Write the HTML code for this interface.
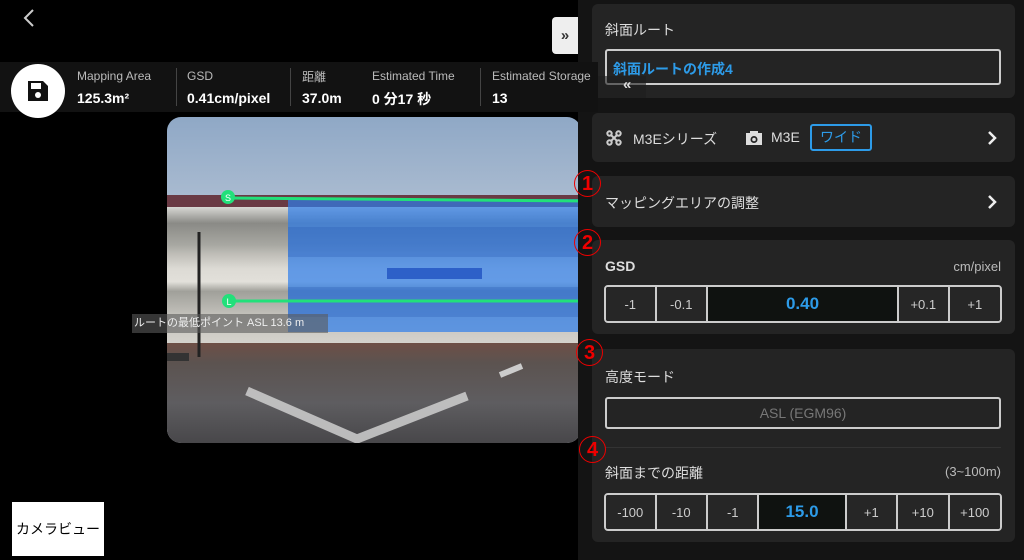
<!DOCTYPE html>
<html><head><meta charset="utf-8"><style>
*{margin:0;padding:0;box-sizing:border-box}
body{width:1024px;height:560px;background:#000;position:relative;overflow:hidden;font-family:"Liberation Sans","Noto Sans CJK JP",sans-serif;color:#ddd}
.abs{position:absolute}
.card{position:absolute;left:592px;width:423px;background:#242424;border-radius:6px}
.lbl{font-size:14px;color:#ddd}
.seg{position:absolute;display:flex;border:2px solid #ccc;border-radius:4px;overflow:hidden;height:38px}
.seg div{border-right:2px solid #ccc;display:flex;align-items:center;justify-content:center;font-size:13px;color:#ccc;background:#262626}
.seg div:last-child{border-right:none}
.seg .v{background:#0f1210;color:#2d9be8;font-size:17px;font-weight:bold}
.red{position:absolute;color:#e00;font-size:20px;font-weight:bold;width:27px;height:27px;border:1.5px solid #e00;border-radius:50%;display:flex;align-items:center;justify-content:center;font-family:"Liberation Sans",sans-serif;line-height:1}
</style></head><body>
<svg class="abs" style="left:22px;top:8px" width="14" height="20"><path d="M11 2 L3 10 L11 18" stroke="#ccc" stroke-width="2" fill="none"/></svg>
<div class="abs" style="left:167px;top:117px;width:414px;height:326px;border-radius:14px;overflow:hidden;background:linear-gradient(#8fa8c6 0%,#b9c6d6 40%,#cdd2d8 100%)">
 <div class="abs" style="left:0;top:78px;width:414px;height:12px;background:#6a3a44"></div>
 <div class="abs" style="left:0;top:90px;width:414px;height:136px;background:linear-gradient(#d8d8d4 0%,#8a8a86 12%,#a8a8a2 28%,#bdbcb6 34%,#dcdad4 45%,#e2e0da 55%,#a0a09a 62%,#c4c2bc 80%,#d4d2cc 100%)"></div>
 <div class="abs" style="left:0;top:226px;width:414px;height:100px;background:linear-gradient(#6e4f46,#5c5350 20%,#5e5d60 60%,#48474a)"></div>
 <div class="abs" style="left:121px;top:82px;width:293px;height:133px;background:rgba(45,125,235,.7)"></div>
 <div class="abs" style="left:121px;top:110px;width:293px;height:30px;background:rgba(30,80,170,.25)"></div>
 <div class="abs" style="left:121px;top:170px;width:293px;height:30px;background:rgba(30,80,170,.25)"></div>
 <div class="abs" style="left:220px;top:151px;width:95px;height:11px;background:#2d60c8"></div>
 <svg class="abs" style="left:0;top:0" width="414" height="326"><path d="M80 274 L190 322 L300 279" stroke="#cfcfcf" stroke-width="9" fill="none" opacity=".85"/><path d="M333 258 L355 249" stroke="#ccc" stroke-width="6"/><line x1="32" y1="115" x2="32" y2="240" stroke="#222" stroke-width="3"/><rect x="0" y="236" width="22" height="8" fill="#333"/></svg>
</div>
<svg class="abs" style="left:0;top:0" width="600" height="340"><path d="M228 198 L590 201" stroke="#22e07a" stroke-width="3"/><path d="M228 301 L590 301" stroke="#22e07a" stroke-width="3"/><circle cx="228" cy="197" r="7" fill="#22e07a"/><circle cx="229" cy="301" r="7" fill="#22e07a"/><text x="228" y="201" font-size="9" fill="#fff" text-anchor="middle" font-family="Liberation Sans">S</text><text x="229" y="305" font-size="9" fill="#fff" text-anchor="middle" font-family="Liberation Sans">L</text></svg>
<div class="abs" style="left:132px;top:314px;width:196px;height:19px;background:rgba(90,90,90,.6);font-size:11px;color:#eee;line-height:19px;padding-left:2px;white-space:nowrap">ルートの最低ポイント ASL 13.6 m</div>
<div class="abs" style="left:12px;top:502px;width:92px;height:54px;background:#fff;color:#000;font-size:14px;display:flex;align-items:center;justify-content:center">カメラビュー</div>
<div class="abs" style="left:578px;top:0;width:446px;height:560px;background:#141414"></div>
<div class="abs" style="left:552px;top:17px;width:26px;height:37px;background:#eee;border-radius:4px 0 0 4px;color:#333;font-size:15px;font-weight:bold;display:flex;align-items:center;justify-content:center">»</div>
<div class="card" style="top:4px;height:94px"></div>
<div class="abs lbl" style="left:605px;top:20px">斜面ルート</div>
<div class="abs" style="left:605px;top:49px;width:396px;height:36px;border:2px solid #ccc;border-radius:3px;color:#2d9be8;font-size:14px;font-weight:bold;padding:8px 0 0 6px">斜面ルートの作成4</div>
<div class="abs" style="left:0;top:62px;width:598px;height:50px;background:#121212"></div>
<div class="abs" style="left:598px;top:76px;width:48px;height:22px;background:rgba(30,30,30,.6)"></div>
<div class="abs" style="left:623px;top:76px;color:#ddd;font-size:15px;font-weight:bold">«</div>
<div class="abs" style="left:11px;top:64px;width:54px;height:54px;border-radius:50%;background:#fff"></div>
<svg class="abs" style="left:26px;top:79px" width="24" height="24"><path d="M2 2h15l5 5v15H2z" fill="#111"/><rect x="5" y="4" width="10" height="6" fill="#fff"/><circle cx="12" cy="16" r="3" fill="#fff"/></svg>
<div class="abs" style="left:77px;top:69px;font-size:12px;color:#bbb">Mapping Area</div>
<div class="abs" style="left:77px;top:90px;font-size:14px;font-weight:bold;color:#fff">125.3m²</div>
<div class="abs" style="left:176px;top:68px;width:1px;height:38px;background:#444"></div>
<div class="abs" style="left:187px;top:69px;font-size:12px;color:#bbb">GSD</div>
<div class="abs" style="left:187px;top:90px;font-size:14px;font-weight:bold;color:#fff">0.41cm/pixel</div>
<div class="abs" style="left:290px;top:68px;width:1px;height:38px;background:#444"></div>
<div class="abs" style="left:302px;top:68px;font-size:12px;color:#bbb">距離</div>
<div class="abs" style="left:302px;top:90px;font-size:14px;font-weight:bold;color:#fff">37.0m</div>
<div class="abs" style="left:372px;top:69px;font-size:12px;color:#bbb">Estimated Time</div>
<div class="abs" style="left:372px;top:89px;font-size:14px;font-weight:bold;color:#fff">0 分17 秒</div>
<div class="abs" style="left:480px;top:68px;width:1px;height:38px;background:#444"></div>
<div class="abs" style="left:492px;top:69px;font-size:12px;color:#bbb;white-space:nowrap">Estimated Storage</div>
<div class="abs" style="left:492px;top:90px;font-size:14px;font-weight:bold;color:#fff">13</div>
<div class="card" style="top:113px;height:49px"></div>
<svg class="abs" style="left:606px;top:130px" width="16" height="16"><g stroke="#ccc" stroke-width="2" fill="none"><circle cx="3.5" cy="3.5" r="2.2"/><circle cx="12.5" cy="3.5" r="2.2"/><circle cx="3.5" cy="12.5" r="2.2"/><circle cx="12.5" cy="12.5" r="2.2"/><path d="M5 5l6 6M11 5l-6 6"/></g></svg>
<div class="abs lbl" style="left:633px;top:129px">M3Eシリーズ</div>
<svg class="abs" style="left:745px;top:130px" width="18" height="16"><rect x="1" y="3" width="16" height="12" fill="#ddd"/><rect x="5" y="1" width="8" height="3" fill="#ddd"/><circle cx="9" cy="9.5" r="3.5" fill="#242424"/><circle cx="9" cy="9.5" r="1.8" fill="#ddd"/></svg>
<div class="abs lbl" style="left:771px;top:129px">M3E</div>
<div class="abs" style="left:810px;top:124px;width:62px;height:27px;border:2px solid #2d9be8;border-radius:3px;color:#2d9be8;font-size:14px;text-align:center;line-height:23px">ワイド</div>
<svg class="abs" style="left:987px;top:130px" width="10" height="16"><path d="M2 2l6 6-6 6" stroke="#eee" stroke-width="2.5" fill="none"/></svg>
<div class="card" style="top:176px;height:51px"></div>
<div class="abs lbl" style="left:605px;top:193px">マッピングエリアの調整</div>
<svg class="abs" style="left:987px;top:194px" width="10" height="16"><path d="M2 2l6 6-6 6" stroke="#eee" stroke-width="2.5" fill="none"/></svg>
<div class="card" style="top:240px;height:94px"></div>
<div class="abs lbl" style="left:605px;top:258px;font-weight:bold">GSD</div>
<div class="abs" style="right:23px;top:259px;font-size:13px;color:#bbb">cm/pixel</div>
<div class="seg" style="left:604px;top:285px;width:398px">
 <div style="width:51px">-1</div><div style="width:52px">-0.1</div><div class="v" style="width:193px">0.40</div><div style="width:51px">+0.1</div><div style="width:51px">+1</div>
</div>
<div class="card" style="top:349px;height:193px"></div>
<div class="abs lbl" style="left:605px;top:367px">高度モード</div>
<div class="abs" style="left:605px;top:397px;width:396px;height:32px;border:2px solid #ccc;border-radius:3px;color:#777;font-size:14px;text-align:center;line-height:28px">ASL (EGM96)</div>
<div class="abs" style="left:605px;top:447px;width:396px;height:1px;background:#333"></div>
<div class="abs lbl" style="left:605px;top:463px">斜面までの距離</div>
<div class="abs" style="right:23px;top:464px;font-size:13px;color:#bbb">(3~100m)</div>
<div class="seg" style="left:604px;top:493px;width:398px">
 <div style="width:51px">-100</div><div style="width:52px">-10</div><div style="width:52px">-1</div><div class="v" style="width:88px">15.0</div><div style="width:52px">+1</div><div style="width:52px">+10</div><div style="width:51px">+100</div>
</div>
<div class="red" style="left:574px;top:170px">1</div>
<div class="red" style="left:574px;top:229px">2</div>
<div class="red" style="left:576px;top:339px">3</div>
<div class="red" style="left:579px;top:436px">4</div>
</body></html>
